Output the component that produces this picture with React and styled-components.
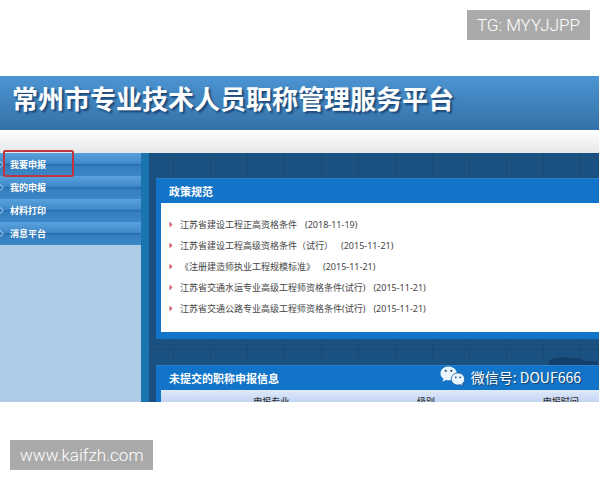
import React from "react";
import styled, { createGlobalStyle } from "styled-components";

const GlobalStyle = createGlobalStyle`
  * {
    box-sizing: border-box;
  }

  body {
    margin: 0;
    background-color: #fff;
    font-family: "Noto Sans", "Noto Sans CJK SC", sans-serif;
    font-size: 9px;
    color: #444;
  }
`;

const Page = styled.div`
  display: flex;
  flex-direction: column;
  gap: 36px;
  padding: 10px 0;
`;

const TagRow = styled.div`
  display: flex;
  justify-content: ${({ $end }) => ($end ? "flex-end" : "flex-start")};
  padding: 0 10px;
`;

const Tag = styled.a`
  padding: 0 10px;
  background-color: #aaa;
  color: #fff;
  font-family: Roboto, sans-serif;
  font-size: 17px;
  font-weight: 300;
  line-height: 30px;
  text-decoration: none;
`;

const Portal = styled.div`
  margin: 0 1px 2px 0;
`;

const Banner = styled.header`
  padding: 0 12px 10px;
  background: linear-gradient(#4c95d3, #3f83bd 50%, #3570a8);
`;

const Title = styled.h1`
  margin: 0;
  color: #fff;
  font-family: "Noto Sans CJK SC", sans-serif;
  font-size: 26px;
  font-weight: 700;
  line-height: 44px;
  white-space: nowrap;
  text-shadow: 2px 2px 2px #1d4674;
`;

const Strip = styled.div`
  height: 23px;
  background: linear-gradient(#fff, #e6e7e9);
`;

const Body = styled.div`
  display: flex;
`;

const Sidebar = styled.nav`
  position: relative;
  flex: 0 0 149px;
  background-color: #adcae6;
  border-right: 8px solid #1a74ad;
`;

const MenuLink = styled.a`
  display: flex;
  align-items: center;
  gap: 5px;
  height: 23px;
  background: linear-gradient(#5aa2dc, #3f8acb 45%, #2a6eab 50%, #357fbf 60%, #3b86c6);
  color: #fff;
  font-family: "Noto Sans CJK SC", sans-serif;
  font-weight: 700;
  text-decoration: none;
`;

const Highlight = styled.div`
  position: absolute;
  top: -3px;
  left: 3px;
  width: 71px;
  height: 27px;
  border: 2px solid #c2343f;
  border-radius: 2px;
  pointer-events: none;
`;

const Main = styled.main`
  flex: 1;
  min-width: 0;
  padding: 25px 0 0 7px;
  background-color: #1b5180;
  background-image: repeating-linear-gradient(
      90deg,
      transparent 0 24px,
      #184a76 24px 25px,
      transparent 25px 37px
    ),
    linear-gradient(
      transparent 0 196px,
      #184a76 196px 197px,
      transparent 197px
    );
`;

const Panel = styled.section`
  position: relative;
  padding-left: 5px;
  background-color: #1274c8;
  border-top: 1px solid #2b80cb;
`;

const PanelTitle = styled.h2`
  margin: 0;
  padding-left: 8px;
  color: #fff;
  font-family: "Noto Sans CJK SC", sans-serif;
  font-size: 11px;
  font-weight: 700;
  line-height: 24px;
`;

const RuleList = styled.ul`
  margin: 0;
  padding: 11px 8px 13px;
  background-color: #fff;
  list-style: none;
`;

const Rule = styled.li`
  display: flex;
  align-items: center;
  gap: 7px;
  height: 21px;
`;

const RuleLink = styled.a`
  color: #444;
  text-decoration: none;
  white-space: nowrap;
`;

const RuleDate = styled.span`
  margin-left: 8px;
`;

const PanelFoot = styled.div`
  height: 7px;
`;

const Gap = styled.div`
  display: flex;
  justify-content: flex-end;
  align-items: flex-end;
  height: 26px;
`;

const TableClip = styled.div`
  height: 12px;
  overflow: hidden;
  background: linear-gradient(#dfe9fa, #c3d5f3);
`;

const Table = styled.table`
  width: 112%;
  border-collapse: collapse;
  table-layout: fixed;
`;

const HeadCell = styled.th`
  width: ${({ $width }) => $width};
  padding: 5px 0 0;
  color: #333;
  font-weight: 500;
  line-height: 13px;
`;

const Contact = styled.div`
  position: absolute;
  top: 0;
  right: 18px;
  display: flex;
  align-items: center;
  gap: 6px;
  color: #fff;
  font-family: "Noto Sans CJK SC", sans-serif;
  font-size: 14px;
  line-height: 20px;
  text-shadow: 1px 1px 1px #1c3f66;
`;

const menu = ["我要申报", "我的申报", "材料打印", "消息平台"];

const rules = [
  { title: "江苏省建设工程正高资格条件", date: "(2018-11-19)" },
  { title: "江苏省建设工程高级资格条件（试行）", date: "(2015-11-21)" },
  { title: "《注册建造师执业工程规模标准》", date: "(2015-11-21)" },
  { title: "江苏省交通水运专业高级工程师资格条件(试行)", date: "(2015-11-21)" },
  { title: "江苏省交通公路专业高级工程师资格条件(试行)", date: "(2015-11-21)" },
];

const MenuArrow = () => (
  <svg width="5" height="9" viewBox="0 0 5 9" fill="none" stroke="#a9d3f5">
    <path d="M0 1.5 3.5 4.5 0 7.5" />
  </svg>
);

const RuleArrow = () => (
  <svg width="4" height="7" viewBox="0 0 4 7" fill="#d4596b">
    <path d="M0.5 0.5 3.5 3.5 0.5 6.5z" />
  </svg>
);

const Cloud = () => (
  <svg width="50" height="8" viewBox="0 0 50 8" fill="#153f6b">
    <path d="M0 8V4Q2 1 8 1Q14 -1 20 1Q30 0 34 3Q38 5 44 4Q48 4 50 6V8z" />
  </svg>
);

const WechatIcon = () => (
  <svg width="25" height="21" viewBox="0 0 25 21">
    <path
      d="M8.5 0.5C4 0.5 0.5 3.6 0.5 7.4c0 2.2 1.1 4 3 5.3l-1 3 3.3-1.8c1 .3 1.9.4 3 .4 4.5 0 8-3.1 8-6.9S13 0.5 8.5 0.5z"
      fill="#e9f6ff"
    />
    <path
      d="M18 7c-3.8 0-6.7 2.7-6.7 6s2.9 6 6.7 6c.9 0 1.7-.1 2.5-.4l2.5 1.6-.7-2.5c1.4-1.1 2.3-2.8 2.3-4.7 0-3.3-2.9-6-6.6-6z"
      fill="#e9f6ff"
      stroke="#1f5c96"
      strokeWidth="0.8"
    />
    <g fill="#244c75">
      <circle cx="5.7" cy="4.8" r="1.1" />
      <circle cx="11.3" cy="4.8" r="1.1" />
      <circle cx="15.8" cy="11.3" r="0.9" />
      <circle cx="20.2" cy="11.3" r="0.9" />
    </g>
  </svg>
);

const App = () => {
  return (
    <>
      <GlobalStyle />
      <Page lang="zh-CN">
        <TagRow $end>
          <Tag as="div">TG: MYYJJPP</Tag>
        </TagRow>

        <Portal>
          <Banner>
            <Title>常州市专业技术人员职称管理服务平台</Title>
          </Banner>
          <Strip />
          <Body>
            <Sidebar>
              {menu.map((item) => (
                <MenuLink href="#" key={item}>
                  <MenuArrow />
                  {item}
                </MenuLink>
              ))}
              <Highlight />
            </Sidebar>
            <Main>
              <Panel>
                <PanelTitle>政策规范</PanelTitle>
                <RuleList>
                  {rules.map((rule) => (
                    <Rule key={rule.title}>
                      <RuleArrow />
                      <RuleLink href="#">
                        {rule.title}
                        <RuleDate>{rule.date}</RuleDate>
                      </RuleLink>
                    </Rule>
                  ))}
                </RuleList>
                <PanelFoot />
              </Panel>
              <Gap>
                <Cloud />
              </Gap>
              <Panel>
                <PanelTitle>未提交的职称申报信息</PanelTitle>
                <TableClip>
                  <Table>
                    <thead>
                      <tr>
                        <HeadCell $width="45%">申报专业</HeadCell>
                        <HeadCell $width="18%">级别</HeadCell>
                        <HeadCell>申报时间</HeadCell>
                      </tr>
                    </thead>
                  </Table>
                </TableClip>
                <Contact>
                  <WechatIcon />
                  <span>微信号: DOUF666</span>
                </Contact>
              </Panel>
            </Main>
          </Body>
        </Portal>

        <TagRow>
          <Tag href="#">www.kaifzh.com</Tag>
        </TagRow>
      </Page>
    </>
  );
};

export default App;
